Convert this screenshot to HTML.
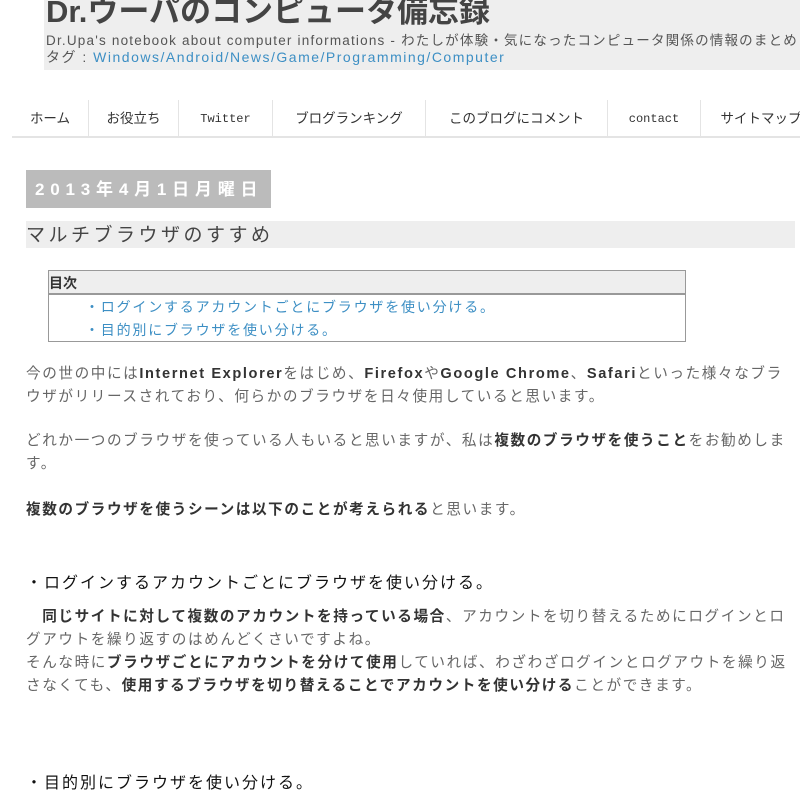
<!DOCTYPE html>
<html><head><meta charset="utf-8"><style>
body{margin:0;width:800px;height:800px;overflow:hidden;background:#fff;font-family:"Liberation Sans","Noto Sans CJK JP",sans-serif;position:relative}
.a{position:absolute;white-space:nowrap}
.hdr{left:44px;top:0;width:756px;height:70px;background:#eeeeee}
.t{left:46px;top:-14px;font-size:31px;color:#444;font-weight:bold}
.sub{left:46px;top:29px;font-size:13.5px;color:#555;letter-spacing:1.2px}
.tag{left:46px;top:47px;font-size:14px;color:#555;letter-spacing:1.5px}
.tag span{color:#3d8fc4}
.nav{left:12px;top:100px;width:788px;height:36px;border-bottom:2px solid #e4e4e4}
.nav div{position:absolute;top:0;height:36px;line-height:38px;font-size:13.5px;color:#333;border-right:1px solid #e4e4e4;text-align:center}
.mono{font-family:"Liberation Mono",monospace;font-size:12px!important}
.date{left:26px;top:170px;width:245px;height:38px;background:#bbbbbb;color:#fff;font-size:17px;font-weight:bold;line-height:40px;text-indent:9px;letter-spacing:5.8px}
.ttl{left:26px;top:221px;width:769px;height:27px;background:#eeeeee;font-size:19px;color:#444;line-height:30px;letter-spacing:3.5px}
.toc{left:48px;top:270px;width:636px;height:70px;border:1px solid #999}
.toch{position:absolute;left:0;top:0;width:636px;height:22px;background:#eeeeee;border-bottom:2px solid #999;font-size:14px;font-weight:bold;color:#333;line-height:24px}
.tocl{position:absolute;left:36px;font-size:14px;color:#3d8fc4;letter-spacing:1.8px}
.p{left:26px;font-size:14.6px;color:#666;line-height:23px;letter-spacing:1.6px}
.p b{color:#333}
.h{left:26px;font-size:16px;color:#111;letter-spacing:2px}
</style></head><body>
<div class="a hdr"></div>
<div class="a t">Dr.ウーパのコンピュータ備忘録</div>
<div class="a sub">Dr.Upa's notebook about computer informations - わたしが体験・気になったコンピュータ関係の情報のまとめ</div>
<div class="a tag">タグ : <span>Windows/Android/News/Game/Programming/Computer</span></div>
<div class="a nav">
<div style="left:0;width:76px">ホーム</div>
<div style="left:77px;width:89px">お役立ち</div>
<div style="left:167px;width:93px" class="mono">Twitter</div>
<div style="left:261px;width:152px">ブログランキング</div>
<div style="left:414px;width:181px">このブログにコメント</div>
<div style="left:596px;width:92px" class="mono">contact</div>
<div style="left:689px;width:120px;border:none">サイトマップ</div>
</div>
<div class="a date">2013年4月1日月曜日</div>
<div class="a ttl">マルチブラウザのすすめ</div>
<div class="a toc"><div class="toch">目次</div>
<div class="tocl" style="top:26px">・ログインするアカウントごとにブラウザを使い分ける。</div>
<div class="tocl" style="top:49px">・目的別にブラウザを使い分ける。</div></div>
<div class="a p" style="top:363px">今の世の中には<b>Internet Explorer</b>をはじめ、<b>Firefox</b>や<b>Google Chrome</b>、<b>Safari</b>といった様々なブラ<br>ウザがリリースされており、何らかのブラウザを日々使用していると思います。</div>
<div class="a p" style="top:430px">どれか一つのブラウザを使っている人もいると思いますが、私は<b>複数のブラウザを使うこと</b>をお勧めしま<br>す。</div>
<div class="a p" style="top:499px"><b>複数のブラウザを使うシーンは以下のことが考えられる</b>と思います。</div>
<div class="a h" style="top:569px">・ログインするアカウントごとにブラウザを使い分ける。</div>
<div class="a p" style="top:606px">　<b>同じサイトに対して複数のアカウントを持っている場合</b>、アカウントを切り替えるためにログインとロ<br>グアウトを繰り返すのはめんどくさいですよね。<br>そんな時に<b>ブラウザごとにアカウントを分けて使用</b>していれば、わざわざログインとログアウトを繰り返<br>さなくても、<b>使用するブラウザを切り替えることでアカウントを使い分ける</b>ことができます。</div>
<div class="a h" style="top:769px">・目的別にブラウザを使い分ける。</div>
</body></html>
